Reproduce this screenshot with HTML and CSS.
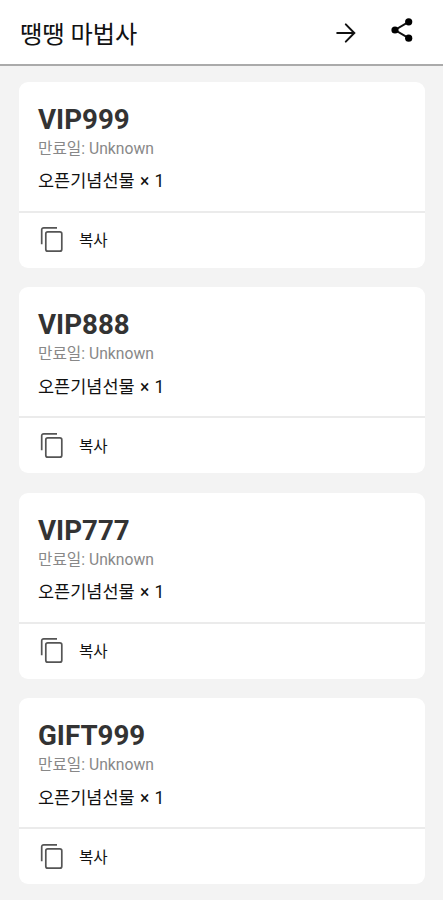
FILE: index.html
```html
<!DOCTYPE html>
<html lang="ko">
<head>
  <meta charset="UTF-8">
  <meta name="viewport" content="width=device-width, initial-scale=1">
  <title>땡땡 마법사</title>
  <link rel="stylesheet" href="styles.css">
</head>
<body>
  <!-- Top Bar -->
  <header class="toolbar">
    <h1 class="title">땡땡 마법사</h1>
    <button class="icon-button" aria-label="arrow">
      <svg class="icon arrow" viewBox="0 0 28 28"><path d="M5.2 14H22M13.8 5.4L22.3 14l-8.5 8.6"/></svg>
    </button>
    <button class="icon-button" aria-label="share">
      <svg class="icon share" viewBox="0 0 28 28">
        <path d="M21.7 5.8L8 14l13.7 8.2"/>
        <circle cx="21.7" cy="5.8" r="3.6"/>
        <circle cx="8" cy="14" r="3.6"/>
        <circle cx="21.7" cy="22.2" r="3.6"/>
      </svg>
    </button>
  </header>

  <!-- Coupon List -->
  <main class="coupons">
    <article class="card">
      <div class="card-body">
        <h2 class="code">VIP999</h2>
        <p class="expires">만료일: Unknown</p>
        <p class="reward">오픈기념선물 × 1</p>
      </div>
      <button class="copy">
        <svg class="copy-icon" viewBox="0 0 24 28"><path d="M1.7 19.3V4.8a2 2 0 0 1 2-2H17"/><rect x="5.8" y="6.8" width="16" height="19.4" rx="2"/></svg>
        <span>복사</span>
      </button>
    </article>

    <article class="card">
      <div class="card-body">
        <h2 class="code">VIP888</h2>
        <p class="expires">만료일: Unknown</p>
        <p class="reward">오픈기념선물 × 1</p>
      </div>
      <button class="copy">
        <svg class="copy-icon" viewBox="0 0 24 28"><path d="M1.7 19.3V4.8a2 2 0 0 1 2-2H17"/><rect x="5.8" y="6.8" width="16" height="19.4" rx="2"/></svg>
        <span>복사</span>
      </button>
    </article>

    <article class="card">
      <div class="card-body">
        <h2 class="code">VIP777</h2>
        <p class="expires">만료일: Unknown</p>
        <p class="reward">오픈기념선물 × 1</p>
      </div>
      <button class="copy">
        <svg class="copy-icon" viewBox="0 0 24 28"><path d="M1.7 19.3V4.8a2 2 0 0 1 2-2H17"/><rect x="5.8" y="6.8" width="16" height="19.4" rx="2"/></svg>
        <span>복사</span>
      </button>
    </article>

    <article class="card">
      <div class="card-body">
        <h2 class="code">GIFT999</h2>
        <p class="expires">만료일: Unknown</p>
        <p class="reward">오픈기념선물 × 1</p>
      </div>
      <button class="copy">
        <svg class="copy-icon" viewBox="0 0 24 28"><path d="M1.7 19.3V4.8a2 2 0 0 1 2-2H17"/><rect x="5.8" y="6.8" width="16" height="19.4" rx="2"/></svg>
        <span>복사</span>
      </button>
    </article>
  </main>
</body>
</html>
```
FILE: styles.css
```css
/* Base Styles */
* {
  box-sizing: border-box;
}

body {
  margin: 0;
  background: #f3f3f3;
  color: #111;
  font-family: Roboto, 'Noto Sans CJK KR', sans-serif;
}

h1, h2, p {
  margin: 0;
}

button {
  padding: 0;
  border: none;
  background: none;
  color: inherit;
  font: inherit;
  cursor: pointer;
}

/* Top Bar */
.toolbar {
  display: flex;
  align-items: center;
  height: 66px;
  padding: 0 28px 0 20px;
  background: #fff;
  border-bottom: 2px solid #aaa;
}

.title {
  flex: 1;
  padding-top: 5px;
  font-size: 24.2px;
  font-weight: 400;
  line-height: 32px;
}

.icon-button {
  display: flex;
  margin-left: 28px;
}

.icon {
  width: 28px;
  height: 28px;
  fill: none;
  stroke: #111;
  stroke-width: 2;
  stroke-linecap: round;
}

.arrow {
  margin: 1px -1px 0 1px;
}

.share {
  margin-top: -4px;
}

.share circle {
  fill: #000;
  stroke: none;
}

/* Coupon List */
.coupons {
  display: flex;
  flex-direction: column;
  gap: 19.5px;
  padding: 15.6px 18px 16px 19px;
}

.card {
  height: 186px;
  background: #fff;
  border-radius: 9px;
}

.card-body {
  height: 131px;
  padding: 21px 19px 0;
  border-bottom: 2px solid #ebebeb;
}

.code {
  color: #333;
  font-size: 27.7px;
  font-weight: 700;
  line-height: 34px;
}

.expires {
  color: #888;
  font-size: 15.7px;
  line-height: 24px;
}

.reward {
  margin-top: 8.7px;
  font-size: 17.5px;
  line-height: 24px;
  word-spacing: 1px;
}

/* Copy Button */
.copy {
  display: flex;
  align-items: center;
  width: 100%;
  height: 53px;
  padding-left: 20.5px;
  font-size: 15.6px;
}

.copy-icon {
  width: 24px;
  height: 28px;
  margin-right: 15.5px;
  fill: none;
  stroke: #555;
  stroke-width: 1.7;
}
```
